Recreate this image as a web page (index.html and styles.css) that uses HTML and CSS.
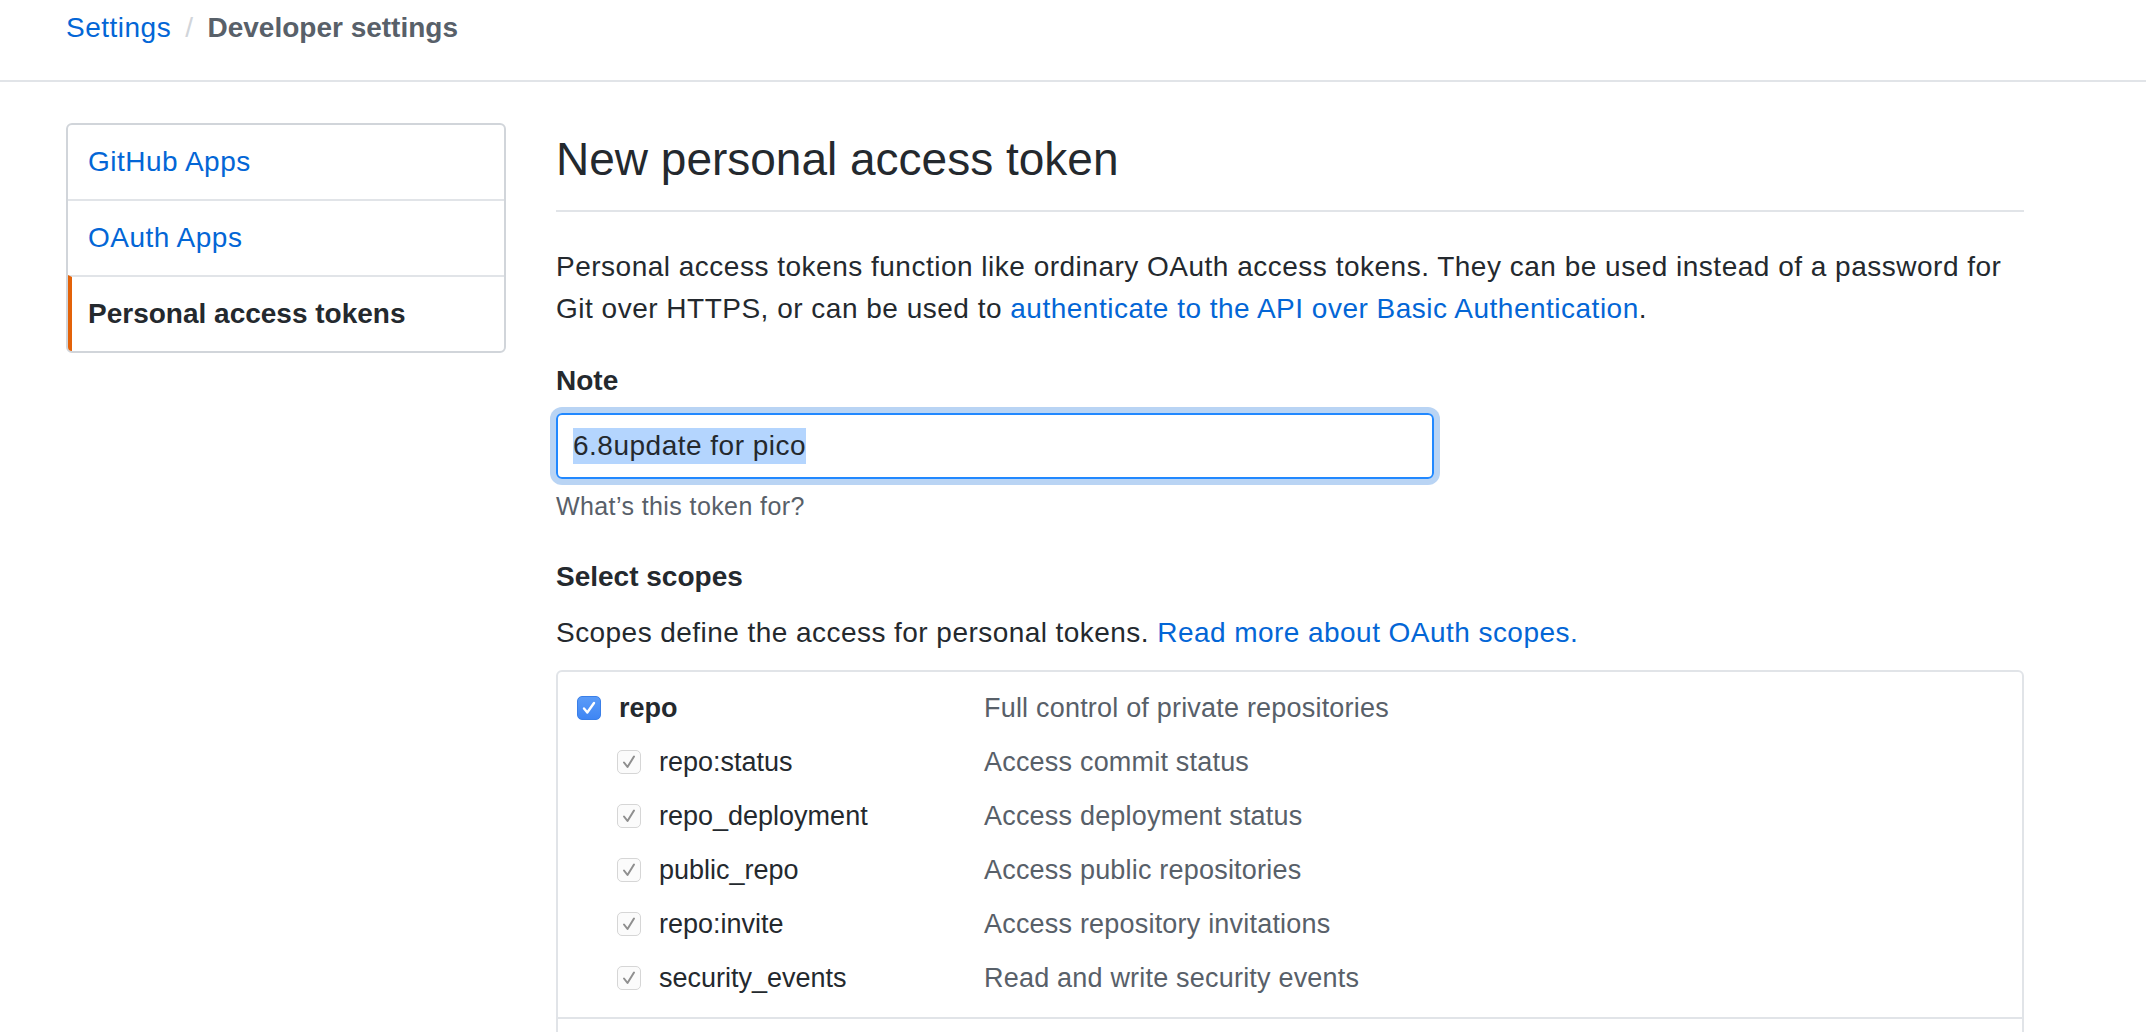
FILE: index.html
```html
<!DOCTYPE html>
<html lang="en">
<head>
<meta charset="utf-8">
<title>New personal access token</title>
<link rel="stylesheet" href="styles.css">
</head>
<body>
<header class="topbar">
  <nav class="breadcrumb">
    <a class="crumb-link" href="#">Settings</a><span class="crumb-sep">/</span><span class="crumb-current">Developer settings</span>
  </nav>
</header>

<div class="layout">
  <aside class="sidebar">
    <a class="menu-item" href="#">GitHub Apps</a>
    <a class="menu-item" href="#">OAuth Apps</a>
    <a class="menu-item menu-item-active" href="#">Personal access tokens</a>
  </aside>

  <main class="content">
    <div class="subhead">
      <h2 class="subhead-title">New personal access token</h2>
    </div>

    <p class="intro"><span>Personal access tokens function like ordinary OAuth access tokens. They can be used instead of a password for</span> <span>Git over HTTPS, or can be used to</span> <a class="link" href="#">authenticate to the API over Basic Authentication</a><span>.</span></p>

    <div class="form-group">
      <div class="form-label">Note</div>
      <div class="text-input"><span class="selected-text">6.8update for pico</span></div>
      <div class="form-note">What’s this token for?</div>
    </div>

    <div class="scopes-title">Select scopes</div>
    <p class="scopes-intro">Scopes define the access for personal tokens. <a class="link" href="#">Read more about OAuth scopes.</a></p>

    <div class="scopes-box">
      <div class="scope-group">
        <div class="scope-row">
          <div class="scope-main">
            <span class="checkbox checkbox-on"><svg viewBox="0 0 24 24" width="24" height="24"><path d="M7 12.5 L10.3 16.5 L17 7" fill="none" stroke="#ffffff" stroke-width="2.4" stroke-linecap="round" stroke-linejoin="round"/></svg></span>
            <span class="scope-name scope-name-parent">repo</span>
          </div>
          <span class="scope-desc">Full control of private repositories</span>
        </div>
        <div class="scope-row scope-row-child">
          <div class="scope-main">
            <span class="checkbox checkbox-disabled"><svg viewBox="0 0 24 24" width="24" height="24"><path d="M7 12.5 L10.5 17 L17 6.5" fill="none" stroke="#8f8f8f" stroke-width="2" stroke-linecap="round" stroke-linejoin="round"/></svg></span>
            <span class="scope-name">repo:status</span>
          </div>
          <span class="scope-desc">Access commit status</span>
        </div>
        <div class="scope-row scope-row-child">
          <div class="scope-main">
            <span class="checkbox checkbox-disabled"><svg viewBox="0 0 24 24" width="24" height="24"><path d="M7 12.5 L10.5 17 L17 6.5" fill="none" stroke="#8f8f8f" stroke-width="2" stroke-linecap="round" stroke-linejoin="round"/></svg></span>
            <span class="scope-name">repo_deployment</span>
          </div>
          <span class="scope-desc">Access deployment status</span>
        </div>
        <div class="scope-row scope-row-child">
          <div class="scope-main">
            <span class="checkbox checkbox-disabled"><svg viewBox="0 0 24 24" width="24" height="24"><path d="M7 12.5 L10.5 17 L17 6.5" fill="none" stroke="#8f8f8f" stroke-width="2" stroke-linecap="round" stroke-linejoin="round"/></svg></span>
            <span class="scope-name">public_repo</span>
          </div>
          <span class="scope-desc">Access public repositories</span>
        </div>
        <div class="scope-row scope-row-child">
          <div class="scope-main">
            <span class="checkbox checkbox-disabled"><svg viewBox="0 0 24 24" width="24" height="24"><path d="M7 12.5 L10.5 17 L17 6.5" fill="none" stroke="#8f8f8f" stroke-width="2" stroke-linecap="round" stroke-linejoin="round"/></svg></span>
            <span class="scope-name">repo:invite</span>
          </div>
          <span class="scope-desc">Access repository invitations</span>
        </div>
        <div class="scope-row scope-row-child">
          <div class="scope-main">
            <span class="checkbox checkbox-disabled"><svg viewBox="0 0 24 24" width="24" height="24"><path d="M7 12.5 L10.5 17 L17 6.5" fill="none" stroke="#8f8f8f" stroke-width="2" stroke-linecap="round" stroke-linejoin="round"/></svg></span>
            <span class="scope-name">security_events</span>
          </div>
          <span class="scope-desc">Read and write security events</span>
        </div>
      </div>
      <div class="scope-group scope-group-next"></div>
    </div>
  </main>
</div>
</body>
</html>
```
FILE: styles.css
```css
html, body {
  overflow: hidden;
}

body {
  margin: 0;
  font-family: "Liberation Sans", Arial, Helvetica, sans-serif;
  font-size: 28px;
  line-height: 42px;
  letter-spacing: 0.5px;
  color: #24292e;
  background: #ffffff;
}

a {
  text-decoration: none;
}

.topbar {
  padding: 7px 66px 31px;
  border-bottom: 2px solid #e1e4e8;
}

.breadcrumb {
  display: flex;
  align-items: baseline;
}

.crumb-link {
  color: #0366d6;
}

.crumb-sep {
  color: #d1d5da;
  padding: 0 14px;
}

.crumb-current {
  color: #586069;
  font-weight: bold;
  letter-spacing: 0;
}

.layout {
  display: flex;
  gap: 50px;
  padding: 41px 0 0 66px;
  width: 1958px;
}

.sidebar {
  flex: 0 0 440px;
  box-sizing: border-box;
  align-self: flex-start;
  border: 2px solid #d1d5da;
  border-radius: 6px;
  display: flex;
  flex-direction: column;
  overflow: hidden;
}

.menu-item {
  display: block;
  padding: 16px 20px;
  color: #0366d6;
  border-top: 2px solid #e1e4e8;
}

.menu-item:first-child {
  border-top: none;
}

.menu-item-active {
  color: #24292e;
  font-weight: bold;
  letter-spacing: 0;
  border-left: 4px solid #e36209;
  padding-left: 16px;
}

.content {
  flex: 1;
  min-width: 0;
}

.subhead {
  padding: 7px 0 22px;
  border-bottom: 2px solid #e1e4e8;
}

.subhead-title {
  margin: 0;
  font-size: 46px;
  line-height: 58px;
  font-weight: normal;
  letter-spacing: 0;
}

.intro {
  margin: 34px 0 0;
}

.link {
  color: #0366d6;
}

.form-group {
  margin-top: 30px;
}

.form-label {
  font-weight: bold;
  letter-spacing: 0;
  margin-bottom: 11px;
}

.text-input {
  width: 878px;
  height: 66px;
  box-sizing: border-box;
  border: 2px solid #2188ff;
  border-radius: 6px;
  box-shadow: 0 0 0 6px rgba(3, 102, 214, 0.28);
  padding: 0 15px;
  display: flex;
  align-items: center;
}

.selected-text {
  background: #b4d5fe;
  line-height: 36px;
  display: inline-block;
}

.form-note {
  margin-top: 9px;
  font-size: 25px;
  line-height: 36px;
  letter-spacing: 0.4px;
  color: #586069;
}

.scopes-title {
  margin-top: 32px;
  font-weight: bold;
  letter-spacing: 0;
}

.scopes-intro {
  margin: 14px 0 0;
  letter-spacing: 0.45px;
}

.scopes-box {
  margin-top: 16px;
  border: 2px solid #e1e4e8;
  border-radius: 6px;
}

.scope-group {
  padding: 9px 19px 12px;
  border-bottom: 2px solid #e1e4e8;
}

.scope-group-next {
  height: 60px;
  box-sizing: border-box;
  border-bottom: none;
}

.scope-row {
  display: flex;
  align-items: center;
  height: 54px;
  font-size: 27px;
  letter-spacing: 0;
}

.scope-main {
  flex: 0 0 407px;
  display: flex;
  align-items: center;
  box-sizing: border-box;
}

.scope-row-child .scope-main {
  padding-left: 40px;
}

.checkbox {
  width: 24px;
  height: 24px;
  box-sizing: border-box;
  border-radius: 5px;
  margin-right: 18px;
  display: inline-flex;
  flex: 0 0 24px;
}

.checkbox svg {
  display: block;
}

.checkbox-on {
  background: linear-gradient(#5a9bf8, #3f86f4);
  border: 1px solid #3a7fe8;
}

.checkbox-on svg {
  margin: -1px;
}

.checkbox-disabled {
  background: #fbfbfb;
  border: 1.5px solid #d6d6d6;
}

.checkbox-disabled svg {
  margin: -1.5px;
}

.scope-name-parent {
  font-weight: bold;
}

.scope-desc {
  color: #586069;
  letter-spacing: 0.2px;
}
```
